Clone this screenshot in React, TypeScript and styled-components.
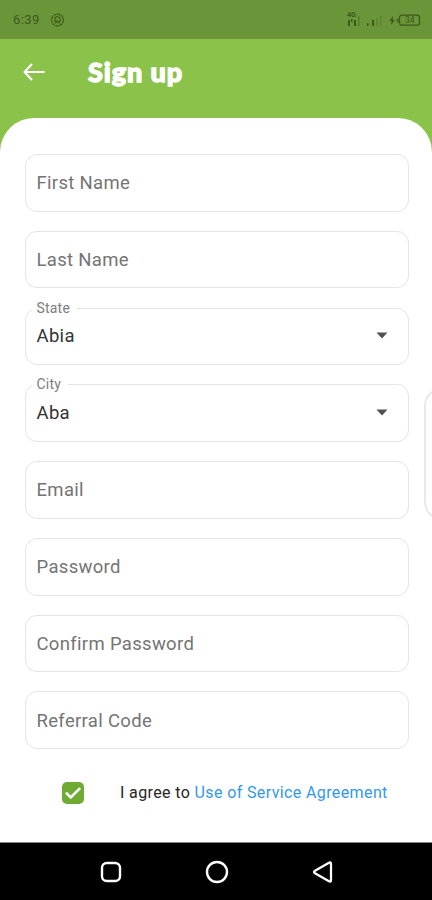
import React from "react";
import styled, { createGlobalStyle } from "styled-components";

const GlobalStyle = createGlobalStyle`
  * { box-sizing: border-box; }
  body { margin: 0; background: #fff; font-family: Roboto, sans-serif; }
`;

const Screen = styled.div`
  position: relative;
  display: flex;
  flex-direction: column;
  width: 432px;
  height: 900px;
  overflow: hidden;
  background: #8bc34a;
`;

const StatusBar = styled.header`
  display: flex;
  flex: none;
  align-items: center;
  justify-content: space-between;
  height: 39px;
  padding: 0 10px 0 13px;
  background: #6b9539;
  color: #3c591b;
`;

const StatusGroup = styled.div`
  display: flex;
  align-items: center;
  gap: 11px;
`;

const Clock = styled.span`
  font: 400 13px/16px Roboto, sans-serif;
  letter-spacing: 0.4px;
  width: 27px;
  white-space: nowrap;
`;

const AppBar = styled.div`
  display: flex;
  flex: none;
  align-items: center;
  gap: 42px;
  height: 79px;
  padding: 0 23px 13px;
  color: #fff;
`;

const BackButton = styled.button`
  display: flex;
  padding: 0;
  border: 0;
  background: none;
  color: inherit;
`;

const Title = styled.h1`
  margin: 0;
  padding-left: 1px;
  font: 900 27px/32px Lato, sans-serif;
  letter-spacing: 0.9px;
  -webkit-text-stroke: 1.3px #fff;
  stroke-linejoin: round;
  white-space: nowrap;
`;

const Sheet = styled.main`
  flex: 1;
  padding: 36px 23.5px 0 24.5px;
  border-radius: 34px 34px 0 0;
  background: #fff;
`;

const Form = styled.form`
  display: flex;
  flex-direction: column;
  gap: 19.2px;
`;

const Field = styled.div<{ $filled: boolean }>`
  position: relative;
  display: flex;
  align-items: center;
  justify-content: space-between;
  height: 57.6px;
  padding: ${(p) => (p.$filled ? "0 19.5px 1px 11px" : "1px 19.5px 0 11px")};
  border: 1.5px solid #e4e4e4;
  border-radius: 12px;
`;

const FieldText = styled.span<{ $filled: boolean }>`
  font-size: 18.5px;
  line-height: 24px;
  letter-spacing: 0.32px;
  color: ${(p) => (p.$filled ? "#333" : "#747474")};
`;

const FloatingLabel = styled.span`
  position: absolute;
  top: -9px;
  left: 6px;
  padding: 0 7px 0 5px;
  background: #fff;
  color: #7d7d7d;
  font-size: 14px;
  line-height: 16px;
  letter-spacing: 0.2px;
`;

const Agreement = styled.div`
  display: flex;
  align-items: center;
  height: 24px;
  margin-top: 31.5px;
  padding-left: 37px;
  gap: 36.5px;
`;

const Checkbox = styled.span`
  display: flex;
  align-items: center;
  justify-content: center;
  flex: none;
  width: 22px;
  height: 22px;
  border-radius: 5px;
  background: #6faa32;
`;

const AgreementText = styled.span`
  padding-top: 1px;
  color: #252525;
  font-size: 16px;
  line-height: 20px;
  letter-spacing: 0.38px;
  white-space: nowrap;
`;

const AgreementLink = styled.a`
  color: #3198ef;
`;

const NavBar = styled.nav`
  display: flex;
  flex: none;
  align-items: center;
  justify-content: center;
  gap: 82px;
  height: 58px;
  padding-left: 1px;
  border-top: 1px solid #888;
  background: #000;
`;

const EdgePanel = styled.aside`
  position: absolute;
  top: 388px;
  left: 424px;
  width: 60px;
  height: 132px;
  border: 2px solid #e9e9e9;
  border-radius: 18px;
  background: #fff;
`;

type FieldData = { label: string; value?: string };

const fields: FieldData[] = [
  { label: "First Name" },
  { label: "Last Name" },
  { label: "State", value: "Abia" },
  { label: "City", value: "Aba" },
  { label: "Email" },
  { label: "Password" },
  { label: "Confirm Password" },
  { label: "Referral Code" },
];

const SpiralIcon = () => (
  <svg width="14" height="14" viewBox="0 0 14 14" fill="none" stroke="currentColor">
    <circle cx="6.5" cy="7" r="5.9" strokeWidth="1.1" strokeDasharray="3.3 .5" />
    <circle cx="6.5" cy="6.5" r="2.8" strokeWidth="1.1" />
    <path d="M4 10.5 6 7.3 9 10.5" strokeWidth="1" />
  </svg>
);

const SignalIcons = () => (
  <svg width="76" height="18" viewBox="0 0 76 18" fill="currentColor">
    <text x="1" y="6" fontFamily="Roboto, sans-serif" fontSize="7" fontWeight="700">4G</text>
    <path d="M2 9h2v6H2zM5 8h1.5v3H5zM8 9h2v6H8z" />
    <path d="M12 5h1.5v10H12z" opacity=".45" />
    <path d="M21 12h1.5v3H21zM26 9h2v6h-2z" />
    <path d="M30 7h1.5v8H30zM34 5h1.5v10H34z" opacity=".3" />
    <path d="m47 5-3.5 5h2.2L45 14l4-5h-2.2z" />
    <rect x="53.5" y="4.2" width="20" height="10" rx="2.5" fill="none" stroke="currentColor" strokeWidth="1.2" />
    <path d="M50.5 7.5H53v4h-2.5z" opacity=".65" />
    <text x="59" y="12.3" fontFamily="Roboto, sans-serif" fontSize="8.5">34</text>
  </svg>
);

const BackIcon = () => (
  <svg width="22" height="18" viewBox="0 0 22 18" fill="none" stroke="currentColor" strokeWidth="2" strokeLinecap="round" strokeLinejoin="round">
    <path d="M21 9H1.5M8.5 1.5 1.5 9l7 7.5" />
  </svg>
);

const CaretIcon = () => (
  <svg width="12" height="7" viewBox="0 0 12 7" fill="#505050">
    <path d="M.5.5h11L6 6.5z" />
  </svg>
);

const CheckIcon = () => (
  <svg width="18" height="14" viewBox="0 0 18 14" fill="none" stroke="#fff" strokeWidth="2.6">
    <path d="m2 6.7 4.7 4.8 9.4-9.4" />
  </svg>
);

const RecentsIcon = () => (
  <svg width="24" height="24" viewBox="0 0 24 24" fill="none" stroke="#fff" strokeWidth="2.4">
    <rect x="3" y="3" width="18" height="18" rx="4.8" />
  </svg>
);

const HomeIcon = () => (
  <svg width="24" height="24" viewBox="0 0 24 24" fill="none" stroke="#fff" strokeWidth="2.4">
    <circle cx="12" cy="12" r="10" />
  </svg>
);

const NavBackIcon = () => (
  <svg width="24" height="24" viewBox="0 0 24 24" fill="none" stroke="#fff" strokeWidth="2.3" strokeLinejoin="round">
    <path d="M4 10.8 18 2.8q2-1 2 1.2v16q0 2.2-2 1.2L4 13.2q-2-1.2 0-2.4z" />
  </svg>
);

export default function App() {
  return (
    <>
      <GlobalStyle />
      <Screen>
        <StatusBar>
          <StatusGroup>
            <Clock>6:39</Clock>
            <SpiralIcon />
          </StatusGroup>
          <SignalIcons />
        </StatusBar>
        <AppBar>
          <BackButton aria-label="Back" type="button">
            <BackIcon />
          </BackButton>
          <Title>Sign up</Title>
        </AppBar>
        <Sheet>
          <Form>
            {fields.map(({ label, value }) => (
              <Field key={label} $filled={!!value}>
                {value && <FloatingLabel>{label}</FloatingLabel>}
                <FieldText $filled={!!value}>{value ?? label}</FieldText>
                {value && <CaretIcon />}
              </Field>
            ))}
          </Form>
          <Agreement>
            <Checkbox role="checkbox" aria-checked="true">
              <CheckIcon />
            </Checkbox>
            <AgreementText>
              I agree to <AgreementLink>Use of Service Agreement</AgreementLink>
            </AgreementText>
          </Agreement>
        </Sheet>
        <EdgePanel />
        <NavBar>
          <RecentsIcon />
          <HomeIcon />
          <NavBackIcon />
        </NavBar>
      </Screen>
    </>
  );
}
